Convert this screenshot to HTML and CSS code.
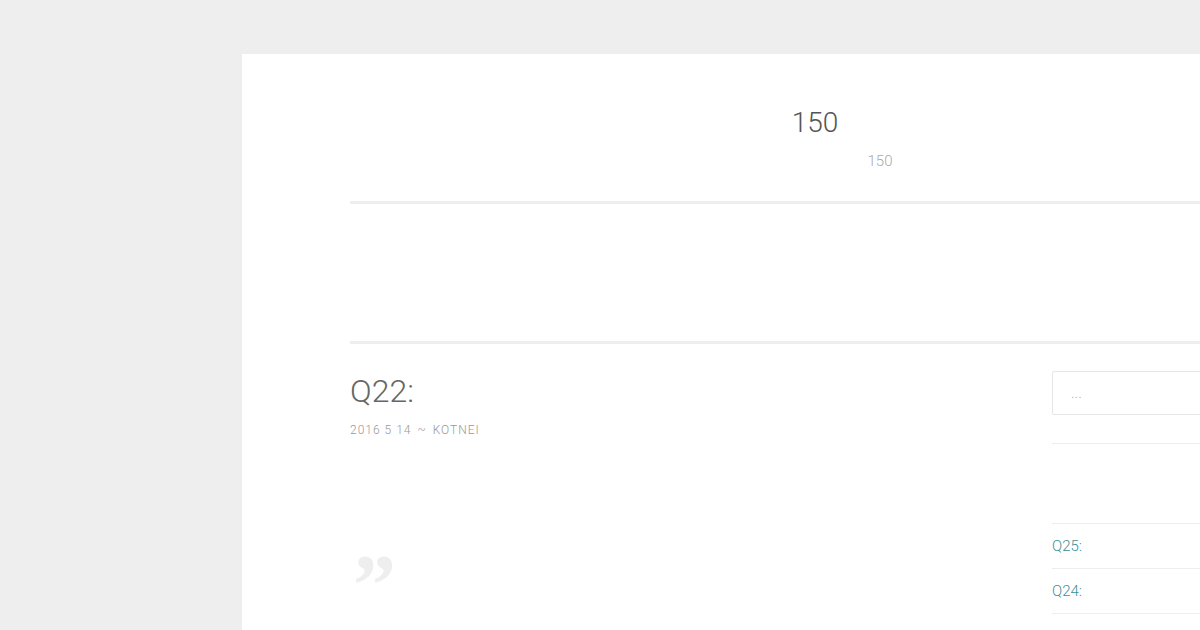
FILE: index.html
```html
<!DOCTYPE html>
<html lang="zh">
<head>
    <meta charset="UTF-8" />
    <meta name="viewport" content="width=device-width, initial-scale=1" />
    <title>150</title>
    <link rel="stylesheet" href="styles.css">
</head>
<body>
    <div class="page">
        <header class="site-header">
            <h1 class="site-title">150</h1>
            <p class="site-desc">150</p>
        </header>
        <div class="nav-area"></div>
        <div class="content-wrap">
            <main class="main">
                <article class="post">
                    <h2 class="post-title">Q22:</h2>
                    <div class="post-meta">
                        <span>2016 5 14</span>
                        <span class="sep">~</span>
                        <span>kotnei</span>
                    </div>
                    <blockquote class="quote">
                        <span class="quote-mark">&#8221;</span>
                    </blockquote>
                </article>
            </main>
            <aside class="sidebar">
                <form class="search">
                    <input type="search" class="search-input" placeholder="..." aria-label="search" />
                </form>
                <div class="widget-title"></div>
                <ul class="recent">
                    <li><a href="#">Q25:</a></li>
                    <li><a href="#">Q24:</a></li>
                    <li><a href="#">Q23:</a></li>
                </ul>
            </aside>
        </div>
    </div>
</body>
</html>
```

FILE: styles.css
```css
/* Grundlayout */
* {
    box-sizing: border-box;
}
html, body {
    margin: 0;
    height: 100%;
    overflow: hidden;
}
body {
    background: #eeeeee;
    font-family: Roboto, "Noto Sans CJK SC", sans-serif;
    font-weight: 300;
    color: #666;
    padding: 54px 0 0 242px;
}

/* Seite */
.page {
    background: #fff;
    width: 1200px;
    min-height: 100%;
    padding: 0 0 0 108px;
}

/* Kopf */
.site-header {
    width: 930px;
    height: 150px;
    padding-top: 52px;
    border-bottom: 3px solid #eeeeee;
}
.site-title {
    margin: 0;
    text-align: center;
    font-size: 28px;
    font-weight: 300;
    line-height: 34px;
    color: #555;
}
.site-desc {
    margin: 11px 0 0;
    padding-left: 130px;
    text-align: center;
    font-size: 15px;
    line-height: 20px;
    color: #aaa;
}

.nav-area {
    height: 140px;
    border-bottom: 3px solid #eeeeee;
}

/* Inhalt */
.content-wrap {
    display: flex;
}
.main {
    width: 702px;
}
.post-title {
    margin: 27px 0 0;
    font-size: 32px;
    font-weight: 300;
    line-height: 40px;
    color: #666;
}
.post-meta {
    margin-top: 11px;
    font-size: 12px;
    line-height: 16px;
    letter-spacing: 1px;
    text-transform: uppercase;
    color: #999;
    display: flex;
    gap: 6px;
}
.quote {
    margin: 104px 0 0 3px;
}
.quote-mark {
    display: block;
    font-family: "Liberation Serif", serif;
    font-weight: 700;
    font-size: 86px;
    line-height: 86px;
    color: #eeeeee;
}

/* Sidebar */
.sidebar {
    flex: 1;
    padding-top: 27px;
}
.search-input {
    width: 100%;
    height: 44px;
    padding: 0 18px;
    border: 1px solid #e6e6e6;
    border-radius: 2px;
    font-family: Roboto, sans-serif;
    font-size: 15px;
    font-weight: 300;
    outline: none;
}
.search-input::placeholder {
    color: #aaa;
}
.widget-title {
    height: 80px;
    margin-top: 28px;
    border-top: 1px solid #eeeeee;
}
.recent {
    list-style: none;
    margin: 0;
    padding: 0;
}
.recent li {
    border-top: 1px solid #eeeeee;
    height: 45px;
    line-height: 44px;
    font-size: 15px;
}
.recent a {
    color: #3f8f98;
    text-decoration: none;
}
```
